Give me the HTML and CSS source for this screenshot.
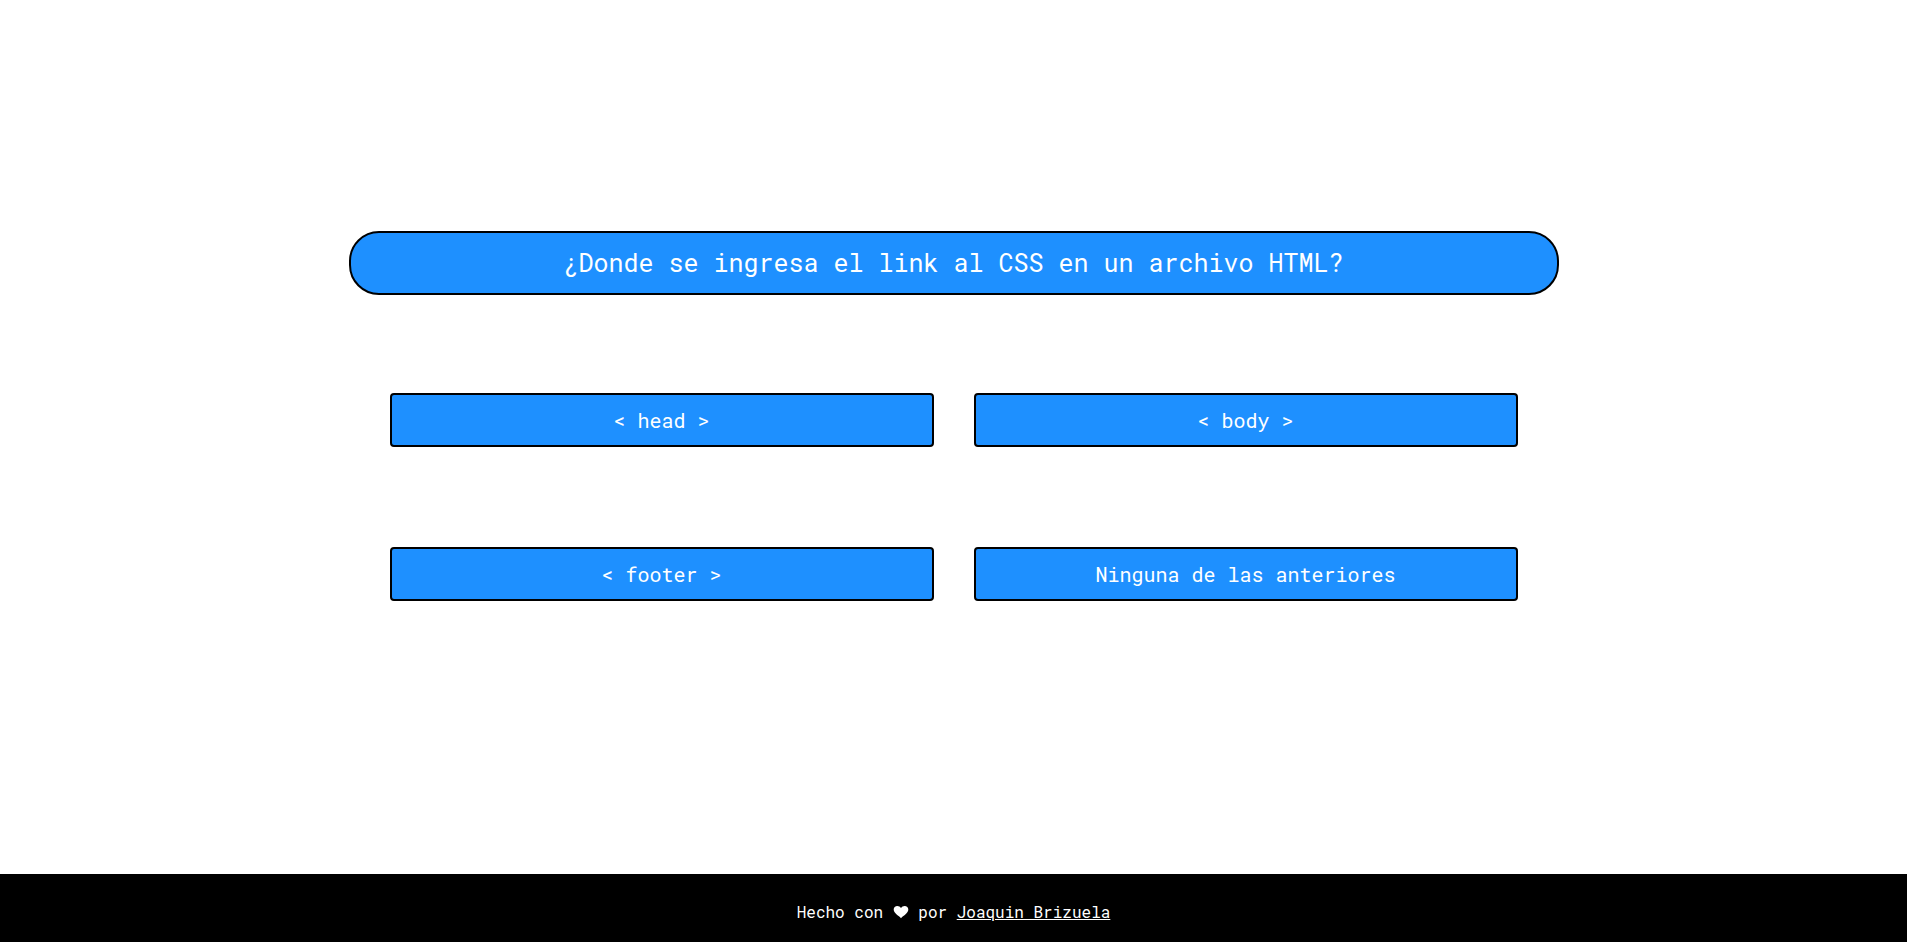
FILE: index.html
```html
<!DOCTYPE html>
<html lang="es">
<head>
<meta charset="utf-8">
<title>Quiz</title>
<link rel="stylesheet" href="styles.css">
</head>
<body>
<main class="quiz">
  <h1 class="question">¿Donde se ingresa el link al CSS en un archivo HTML?</h1>
  <div class="options">
    <button class="option" type="button">&lt; head &gt;</button>
    <button class="option" type="button">&lt; body &gt;</button>
    <button class="option" type="button">&lt; footer &gt;</button>
    <button class="option" type="button">Ninguna de las anteriores</button>
  </div>
</main>
<footer class="footer">
  <p class="credit">Hecho con <svg class="heart" viewBox="0 0 16 16" aria-hidden="true"><path fill="currentColor" d="M8 14.2C6.800 12.900 4.600 11.600 2.700 9.600C1.400 8.200 .7 7 .7 5.500C.7 3.500 2.300 2 4.300 2C5.900 2 7.200 2.700 8 4C8.800 2.700 10.100 2 11.700 2C13.700 2 15.300 3.500 15.300 5.500C15.300 7 14.600 8.200 13.300 9.600C11.400 11.600 9.200 12.900 8 14.200Z"/></svg> por <a class="author" href="#">Joaquin Brizuela</a></p>
</footer>
</body>
</html>
```
FILE: styles.css
```css
* { box-sizing: border-box; }

body {
  margin: 0;
  min-height: 100vh;
  display: flex;
  flex-direction: column;
  background: #fff;
  color: #fff;
  font-family: "Roboto Mono", "DejaVu Sans Mono", monospace;
}

.quiz {
  flex: 1;
  display: flex;
  flex-direction: column;
  align-items: center;
  justify-content: center;
  gap: 98px;
  padding-bottom: 42px;
}

.question {
  width: 1210px;
  max-width: 100%;
  margin: 0;
  padding: 14px;
  border: 2px solid #000;
  border-radius: 30px;
  background: #1e90ff;
  font-size: 25px;
  font-weight: 400;
  line-height: 32px;
  text-align: center;
}

.options {
  display: grid;
  grid-template-columns: 1fr 1fr;
  gap: 100px 40px;
  width: 1128px;
  max-width: 100%;
}

.option {
  padding: 12px;
  border: 2px solid #000;
  border-radius: 4px;
  background: #1e90ff;
  color: inherit;
  font: 20px/26px "Roboto Mono", "DejaVu Sans Mono", monospace;
}

.footer {
  padding: 24px 0 16px;
  background: #000;
  text-align: center;
}

.credit {
  margin: 0;
  font-size: 16px;
  line-height: 28px;
}

.heart {
  width: 16px;
  height: 16px;
  vertical-align: -2px;
}

.author { color: inherit; }
```
